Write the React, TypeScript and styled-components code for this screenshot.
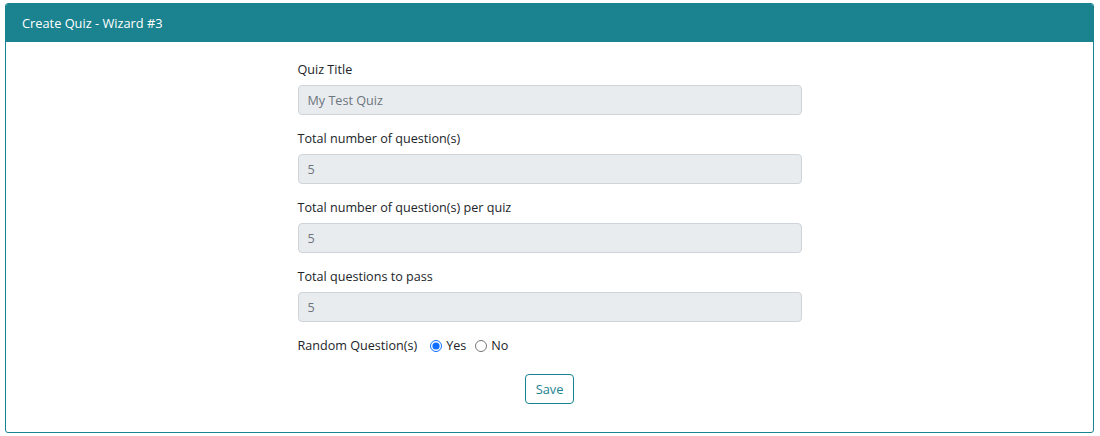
import styled, { createGlobalStyle } from 'styled-components';

const GlobalStyle = createGlobalStyle`
  body {
    margin: 0;
    background: #ffffff;
    font-family: 'Open Sans', 'Noto Sans', sans-serif;
    color: #212529;
  }
  #root {
    padding: 3px 6px 2px 5px;
  }
`;

const Card = styled.section`
  border: 1px solid #1a838f;
  border-radius: 3px;
  background: #fff;
  overflow: hidden;
`;

const CardHeader = styled.header`
  background: #1a838f;
  color: #ffffff;
  height: 38px;
  display: flex;
  align-items: center;
  padding: 0 16px;
  font-size: 12.8px;
`;

const CardBody = styled.div`
  display: flex;
  justify-content: center;
  padding: 18px 0 28px;
`;

const Form = styled.form`
  width: 504px;
  display: flex;
  flex-direction: column;
`;

const Field = styled.div`
  display: flex;
  flex-direction: column;
  margin-bottom: 14px;
`;

const Label = styled.label`
  font-size: 12.6px;
  line-height: 20px;
  margin-bottom: 5px;
`;

const Input = styled.input`
  height: 30px;
  box-sizing: border-box;
  border: 1px solid #ced4da;
  border-radius: 4px;
  background: #e9ecef;
  color: #6c757d;
  font-family: inherit;
  font-size: 12.6px;
  padding: 0 9px;
  outline: none;
`;

const RadioRow = styled.div`
  display: flex;
  align-items: center;
  height: 19px;
  font-size: 12.6px;
`;

const RadioLabel = styled.span`
  margin-right: 13px;
`;

const RadioOption = styled.label`
  display: inline-flex;
  align-items: center;
  gap: 4px;
  margin-right: 9px;
`;

const Radio = styled.input`
  width: 12px;
  height: 12px;
  margin: 0;
  accent-color: #0d6efd;
`;

const Actions = styled.div`
  display: flex;
  justify-content: center;
  margin-top: 19px;
`;

const OutlineButton = styled.button`
  height: 30px;
  padding: 0 10px;
  border: 1px solid #1a838f;
  border-radius: 4px;
  background: #fff;
  color: #1a838f;
  font-family: inherit;
  font-size: 12.8px;
  cursor: pointer;
`;

const fields = [
  { id: 'title', label: 'Quiz Title', value: 'My Test Quiz' },
  { id: 'total', label: 'Total number of question(s)', value: '5' },
  { id: 'perQuiz', label: 'Total number of question(s) per quiz', value: '5' },
  { id: 'pass', label: 'Total questions to pass', value: '5' }
];

export default function App() {
  return (
    <>
      <GlobalStyle />
      <Card>
        <CardHeader>Create Quiz - Wizard #3</CardHeader>
        <CardBody>
          <Form onSubmit={(e) => e.preventDefault()}>
            {fields.map(({ id, label, value }) => (
              <Field key={id}>
                <Label htmlFor={id}>{label}</Label>
                <Input id={id} value={value} readOnly />
              </Field>
            ))}
            <RadioRow>
              <RadioLabel>Random Question(s)</RadioLabel>
              <RadioOption>
                <Radio type="radio" name="random" defaultChecked />
                Yes
              </RadioOption>
              <RadioOption>
                <Radio type="radio" name="random" />
                No
              </RadioOption>
            </RadioRow>
            <Actions>
              <OutlineButton type="submit">Save</OutlineButton>
            </Actions>
          </Form>
        </CardBody>
      </Card>
    </>
  );
}
